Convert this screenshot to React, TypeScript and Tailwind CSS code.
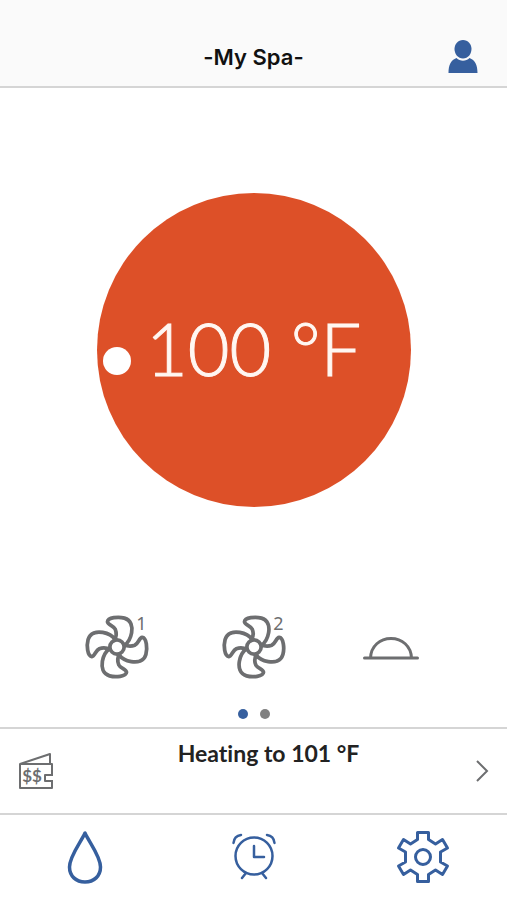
import React from "react";

const BLADE =
  "M-8 -20C-3 -28 -1 -42 -5 -52C-10 -63 -27 -65 -28 -74C-27 -87 4 -90 22 -85C42 -79 46 -60 43 -42C40 -26 34 -14 23 -6";

function Fan() {
  return (
    <svg viewBox="-100 -100 200 200" className="size-[68px]" fill="none" stroke="currentColor" strokeWidth="11" strokeLinecap="round" strokeLinejoin="round">
      <circle r="21" />
      {[0, 90, 180, 270].map((angle) => (
        <path key={angle} d={BLADE} transform={`rotate(${angle})`} />
      ))}
    </svg>
  );
}

function PumpButton({ number }: { number: number }) {
  return (
    <button type="button" aria-label={`Pump ${number}`} className="flex justify-center">
      <span className="relative">
        <Fan />
        <span className="absolute top-0 right-1 font-['Noto_Sans',sans-serif] text-lg leading-5">{number}</span>
      </span>
    </button>
  );
}

function Dome() {
  return (
    <svg viewBox="0 0 58 68" className="h-[68px] w-[58px]" fill="none" stroke="currentColor" strokeWidth="3" strokeLinecap="round">
      <path d="M2.500 45H55.500M8.500 45C9 33 18 25.500 29 25.500S49 33 49.500 45" />
    </svg>
  );
}

function Wallet() {
  return (
    <svg viewBox="0 0 36 38" className="h-[38px] w-9" fill="none" stroke="currentColor" strokeWidth="2" strokeLinejoin="round">
      <path d="M34 23V12H2V36H34V29M2 12L32 2V12M35 23H27V29H35" />
      <text x="14" y="30" textAnchor="middle" fill="currentColor" stroke="none" fontSize="17" fontWeight="bold" fontFamily="Lato, sans-serif">
        $$
      </text>
    </svg>
  );
}

function Drop() {
  return (
    <svg viewBox="0 0 36 56" className="h-14 w-9" fill="none" stroke="currentColor" strokeWidth="3.500" strokeLinejoin="round">
      <path d="M18 4C14 13 2.500 27 2.500 38C2.500 47 9 53 18 53S33.500 47 33.500 38C33.500 27 22 13 18 4Z" />
    </svg>
  );
}

function AlarmClock() {
  return (
    <svg viewBox="0 0 46 50" className="h-[50px] w-[46px]" fill="none" stroke="currentColor" strokeWidth="2.500" strokeLinecap="round" strokeLinejoin="round">
      <circle cx="23" cy="24" r="18.500" />
      <path d="M23 14V25H33" />
      <path d="M2.500 11C3 6 5.500 3.500 10 3M43.500 11C43 6 40.500 3.500 36 3M15 41L11 46M31 41L35 46" />
    </svg>
  );
}

function Gear() {
  return (
    <svg viewBox="-27 -27 54 54" className="size-[54px]" fill="none" stroke="currentColor" strokeWidth="3" strokeLinejoin="round">
      <circle r="7.500" strokeWidth="3" />
      <path d="M-5.500 -24.500H5.500V-17.500L12.500 -13L19.500 -17.500L24.500 -9L17.500 -5V5L24.500 9L19.500 17.500L12.500 13L5.500 17.500V24.500H-5.500V17.500L-12.500 13L-19.500 17.500L-24.500 9L-17.500 5V-5L-24.500 -9L-19.500 -17.500L-12.500 -13L-5.500 -17.500Z" />
    </svg>
  );
}

export default function App() {
  return (
    <div className="flex min-h-screen flex-col bg-white font-[Lato,sans-serif] text-[#6d6e70] [font-variant-ligatures:none]">
      <header className="grid h-[88px] grid-cols-[1fr_auto_1fr] items-end border-b-2 border-[#d5d5d5] bg-[#fafafa] px-7 pb-[11px]">
        <h1 className="col-start-2 font-[Inter,sans-serif] text-[22px] leading-9 font-semibold text-[#111]">-My Spa-</h1>
        <button type="button" aria-label="Account" className="justify-self-end text-[#365f9e]">
          <svg viewBox="0 0 32 36" className="h-9 w-8" fill="currentColor">
            <path d="M16 1C11 1 7.500 5 7.500 10C7.500 15 11 19.500 16 19.500S24.500 15 24.500 10C24.500 5 21 1 16 1Z" />
            <path d="M9.500 19C4 21 1.500 26 1.500 34H30.500C30.500 26 28 21 22.500 19C19 22.500 13 22.500 9.500 19Z" />
          </svg>
        </button>
      </header>

      <main className="flex flex-1 flex-col">
        <section aria-label="Temperature" className="flex flex-1 items-center justify-center pb-0.5">
          <div className="relative flex size-[314px] items-center justify-center rounded-full bg-[#dd5028]">
            <button type="button" aria-label="Adjust temperature" className="absolute top-[154px] left-1.5 size-7 rounded-full bg-white" />
            <p className="pb-1 text-[72px] leading-none font-light text-[#fff7f2] [-webkit-text-stroke:1px_#fff7f2]">100 °F</p>
          </div>
        </section>

        <div className="grid grid-cols-3 px-12">
          <PumpButton number={1} />
          <PumpButton number={2} />
          <button type="button" aria-label="Cover" className="flex justify-center">
            <Dome />
          </button>
        </div>

        <div className="flex h-[46px] items-end justify-center gap-3 pb-2">
          <button type="button" aria-label="Page 1" className="size-2.5 rounded-full bg-[#365f9e]" />
          <button type="button" aria-label="Page 2" className="size-2.5 rounded-full bg-[#808080]" />
        </div>
      </main>

      <button type="button" className="flex h-[86px] items-center border-t-2 border-[#d5d5d5]">
        <span className="flex w-[72px] justify-center">
          <Wallet />
        </span>
        <span className="flex-1 self-start pt-2 text-center text-[23px] leading-8 font-bold text-[#222]">Heating to 101 °F</span>
        <span className="flex w-[42px] pl-2.5">
          <svg viewBox="0 0 14 24" className="h-6 w-3.5" fill="none" stroke="currentColor" strokeWidth="2">
            <path d="M2 2L12 12L2 22" />
          </svg>
        </span>
      </button>

      <nav className="grid h-[87px] grid-cols-3 border-t-2 border-[#d5d5d5] pb-0.5 text-[#365f9e]">
        <a href="#water" aria-label="Water" className="flex items-center justify-center">
          <Drop />
        </a>
        <a href="#schedule" aria-label="Schedule" className="flex items-center justify-center">
          <AlarmClock />
        </a>
        <a href="#settings" aria-label="Settings" className="flex items-center justify-center">
          <Gear />
        </a>
      </nav>
    </div>
  );
}
